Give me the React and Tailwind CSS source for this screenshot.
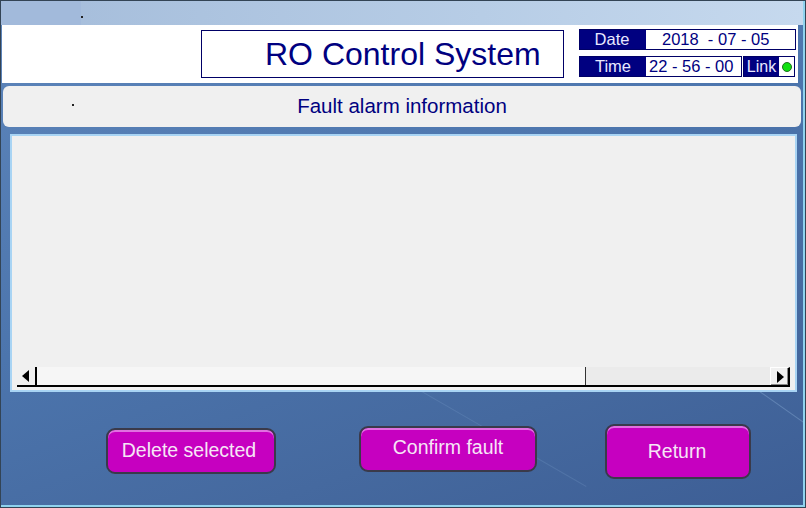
import React from 'react';

const font = { fontFamily: '"Liberation Sans", Arial, sans-serif' };

function ArrowLeft() {
  return (
    <svg width="8" height="12" viewBox="0 0 8 12">
      <path d="M7 0 L0 6 L7 12 Z" fill="#000" />
    </svg>
  );
}

function ArrowRight() {
  return (
    <svg width="8" height="12" viewBox="0 0 8 12">
      <path d="M1 0 L8 6 L1 12 Z" fill="#000" />
    </svg>
  );
}

function MagentaButton({ label, className }) {
  return (
    <button
      className={`rounded-[9px] border-2 border-[#3a3a4a] bg-[#c600c0] text-[19.5px] text-[#f6e6f6] shadow-[inset_0_2px_0_#e070e0] ${className}`}
    >
      {label}
    </button>
  );
}

export default function App() {
  return (
    <div
      style={font}
      className="relative w-[806px] h-[508px] overflow-hidden border border-[#334455] bg-[linear-gradient(160deg,#5e86bb_0%,#4c75ad_45%,#45699f_75%,#3d5e95_100%)]"
    >
      {/* diagonal streaks */}
      <div className="absolute left-[700px] top-[405px] w-[160px] h-[1px] bg-[#8cb0d8] opacity-40 rotate-[35deg]" />
      <div className="absolute left-[380px] top-[430px] w-[220px] h-[1px] bg-[#8cb0d8] opacity-20 rotate-[30deg]" />

      <div className="relative flex flex-col h-full border-r-2 border-b-2 border-[#8fd3ee]">
        {/* TOP BAR */}
        <div className="flex h-[24px] bg-[linear-gradient(90deg,#a4bcda,#b7cde6_60%,#c6d9ee)]">
          <div className="w-[80px] bg-[#a2badb]" />
          <div className="w-[2px] h-[2px] bg-[#222] mt-[15px]" />
        </div>

        {/* HEADER */}
        <div className="flex items-center h-[58px] ml-[1px] mr-[5px] bg-white">
          <div className="ml-[199px] w-[363px] h-[48px] border border-[#000066] flex items-center pl-[63px] text-[32px] text-[#000080]">
            RO Control System
          </div>
          <div className="ml-[15px] -mt-[2px] flex flex-col gap-[6px] text-[16.5px] leading-none">
            <div className="flex h-[21px] border border-[#000066]">
              <div className="w-[66px] bg-[#000080] text-[#e8e8ff] flex items-center justify-center pr-[2px]">
                Date
              </div>
              <div className="w-[149px] bg-white text-[#000080] flex items-center pl-[16px]">
                2018&nbsp;&nbsp;- 07 - 05
              </div>
            </div>
            <div className="flex h-[21px]">
              <div className="flex border border-[#000066]">
                <div className="w-[66px] bg-[#000080] text-[#e8e8ff] flex items-center justify-center">
                  Time
                </div>
                <div className="w-[95px] bg-white text-[#000080] flex items-center pl-[3px]">
                  22 - 56 - 00
                </div>
              </div>
              <div className="ml-[1px] flex border border-[#000066]">
                <div className="w-[35px] bg-[#000080] text-[#e8e8ff] flex items-center justify-center text-[16px]">
                  Link
                </div>
                <div className="w-[15px] bg-white flex items-center justify-center">
                  <div className="w-[10px] h-[10px] rounded-full bg-[#10e010] border border-[#207020]" />
                </div>
              </div>
            </div>
          </div>
        </div>

        {/* FAULT HEADER */}
        <div className="relative mt-[3px] mx-[2px] h-[41px] rounded-[6px] bg-[#f0f0f0] flex items-center justify-center text-[20.5px] text-[#000080]">
          <div className="absolute left-[69px] top-[18px] w-[2px] h-[2px] bg-[#222]" />
          Fault alarm information
        </div>

        {/* LIST */}
        <div className="mt-[7px] ml-[9px] mr-[6px] h-[258px] border-2 border-[#a8d4f4] bg-[#f0f0f0] flex flex-col justify-end pb-[3px] px-[5px]">
          <div className="flex h-[20px] border-b-2 border-black">
            <div className="w-[20px] border-r-2 border-black flex items-center justify-center bg-[#f0f0f0]">
              <ArrowLeft />
            </div>
            <div className="w-[549px] border-r border-[#333] bg-[#f6f6f6]" />
            <div className="flex-1 bg-[#ebebeb]" />
            <div className="w-[20px] border-l border-t border-white border-r-2 border-r-black shadow-[inset_-1px_-1px_0_#888] flex items-center justify-center bg-[#f0f0f0]">
              <ArrowRight />
            </div>
          </div>
        </div>

        {/* BUTTONS */}
        <div className="relative flex-1">
          <MagentaButton label="Delete selected" className="absolute left-[105px] top-[36px] w-[170px] h-[46px] pr-[4px]" />
          <MagentaButton label="Confirm fault" className="absolute left-[358px] top-[34px] w-[178px] h-[46px] pb-[2px]" />
          <MagentaButton label="Return" className="absolute left-[604px] top-[32px] w-[146px] h-[55px] pr-[2px]" />
        </div>
      </div>
    </div>
  );
}
